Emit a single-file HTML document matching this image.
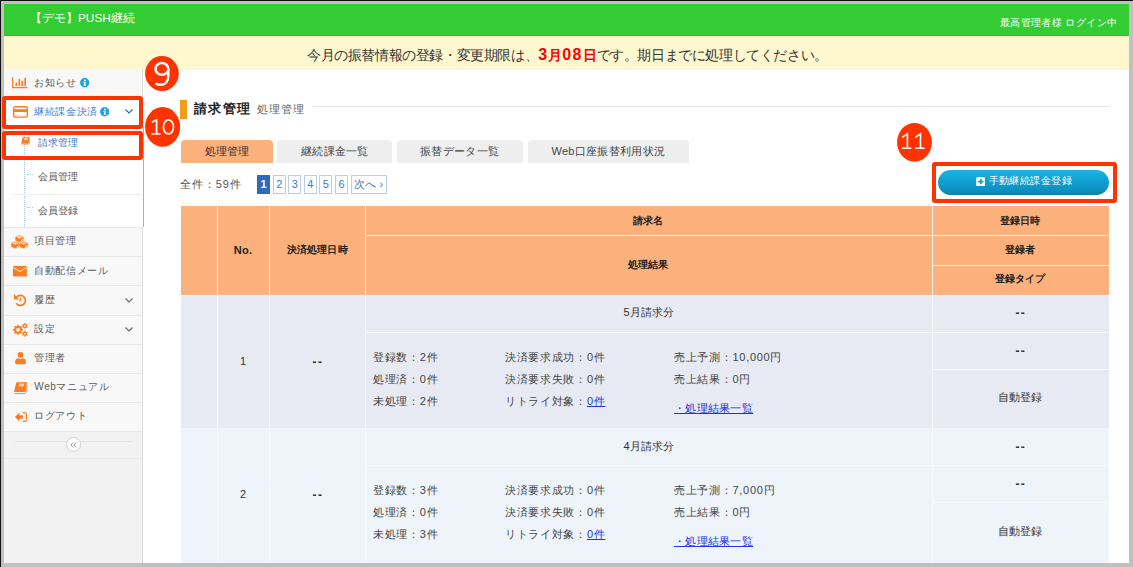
<!DOCTYPE html>
<html lang="ja">
<head>
<meta charset="utf-8">
<style>
*{box-sizing:border-box;margin:0;padding:0}
html,body{width:1133px;height:567px;overflow:hidden;background:#c0c0c0}
body{font-family:"Liberation Sans",sans-serif;color:#333;position:relative}
.frame-t{position:absolute;left:0;top:0;width:1133px;height:1px;background:#111}
.frame-l{position:absolute;left:0;top:0;width:1px;height:567px;background:#111}
.page{position:absolute;left:4px;top:4px;width:1125px;height:559px;background:#fff;overflow:hidden}
.abs{position:absolute}
.hdr{left:0;top:0;width:1125px;height:32px;background:#33cc33;color:#fff;border-bottom:1px solid #2fc02f}
.hdr .ttl{position:absolute;left:26px;top:7px;font-size:11.8px;white-space:nowrap}
.hdr .usr{position:absolute;right:11.6px;top:12px;font-size:10px;letter-spacing:0.4px;white-space:nowrap}
.ban{left:0;top:32px;width:1125px;height:33.5px;background:#fff8ce;font-size:14px;letter-spacing:-0.4px;color:#333;white-space:nowrap}
.ban span.t{position:absolute;left:303px;top:10px}
.ban b{color:#ff0000;letter-spacing:0}
.ban i{font-style:normal;font-size:16px;letter-spacing:1.2px}
.side{left:0;top:65px;width:139px;height:494px;background:#f2f2f2;border-right:1px solid #dcdcdc}

.mi{position:absolute;left:0;width:138px;background:#f8f8f8;border-top:1px solid #e8e8e8;font-size:11px;color:#666;white-space:nowrap}
.mi .tx{position:absolute;left:30px;top:0}
.ic{position:absolute;overflow:visible}
.info{position:absolute;width:9px;height:9px;border-radius:50%;background:#1fa1dd;color:#fff;font:bold 7px/9px "Liberation Serif",serif;text-align:center}
.chev{position:absolute;width:8px;height:5px}
.sub{position:absolute;left:0;top:58.4px;width:140px;height:99.6px;background:#fff;border-right:1.5px solid #f59a5a}
.si{position:absolute;left:0;width:138px;height:33.2px;font-size:11px;color:#666;white-space:nowrap}
.si .tx{position:absolute;left:34px}
.vdot{position:absolute;left:20px;top:0;width:0;height:99.6px;border-left:1px dotted #a9c9ea}
.hdot{position:absolute;left:23px;width:6px;height:0;border-top:1px dotted #a9c9ea}
.stx{position:absolute;left:30.3px;font-size:10px;line-height:12px;letter-spacing:0.6px;color:#5a5a5a;white-space:nowrap}
.stx.sb{left:34.2px;letter-spacing:0}
.red{position:absolute;border:4px solid #ff3300;border-radius:3px}

.A{position:absolute;white-space:nowrap}
.badge{position:absolute;background:#ff3300;border-radius:50%;color:#fff;text-align:center;font-family:"Liberation Sans",sans-serif}
.tab{position:absolute;top:139.6px;height:23.2px;border-radius:4px 4px 0 0;background:#eeeeee;color:#444;font-size:11px;letter-spacing:0.3px;line-height:23px;text-align:center;white-space:nowrap}
.pg{position:absolute;top:175.4px;width:13px;height:18.5px;border:1px solid #b9cdea;color:#3b7ac9;font-size:11px;line-height:16.5px;text-align:center;background:#fff}
.th{position:absolute;font-weight:bold;color:#222;font-size:10px;text-align:center;white-space:nowrap}
.td{position:absolute;color:#333;font-size:11px;text-align:center;white-space:nowrap}
.hl{position:absolute;height:1px;background:#fbf4ee}
.vl{position:absolute;width:1px;background:#fbf4ee}
.bl{position:absolute;height:1px;background:#f7f9fc}
.bv{position:absolute;width:1px;background:#f7f9fc}
.det{position:absolute;color:#444;font-size:11px;letter-spacing:0.7px;white-space:nowrap;line-height:22px}
.det a{color:#2233dd;text-decoration:underline}
.det a.l{letter-spacing:0.3px}
.dash{font-size:12px!important;letter-spacing:1.4px;text-indent:1.4px;margin-top:1.5px}
</style>
</head>
<body>
<div class="page">
  <div class="abs hdr"><span class="ttl">【デモ】PUSH継続</span><span class="usr">最高管理者様 ログイン中</span></div>
  <div class="abs ban"><span class="t">今月の振替情報の登録・変更期限は、<b><i>3</i>月<i>08</i>日</b>です。期日までに処理してください。</span></div>

  <div class="abs side">
    <div class="mi" style="top:0;height:29.2px;border-top:none"></div>
    <div class="mi" style="top:29.2px;height:29.2px;background:#fff;border-top:none"></div>
    <div class="sub">
      <div class="vdot"></div>
      <div class="A" style="left:7px;top:66.4px;width:131px;height:1px;background:#eeeeee"></div>
      <div class="hdot" style="top:46.3px"></div>
      <div class="hdot" style="top:80px"></div>
    </div>
    <div class="mi" style="top:158px;height:29.2px"></div>
    <div class="mi" style="top:187.2px;height:29.2px"></div>
    <div class="mi" style="top:216.4px;height:29.2px"></div>
    <div class="mi" style="top:245.6px;height:29.2px"></div>
    <div class="mi" style="top:274.8px;height:29.2px"></div>
    <div class="mi" style="top:304px;height:29.2px"></div>
    <div class="mi" style="top:333.2px;height:29.2px"></div>
    <div class="stx" style="top:7.6px">お知らせ</div>
    <div class="stx" style="top:36.7px;color:#3b7dcc">継続課金決済</div>
    <div class="stx sb" style="top:67.9px;color:#3b7dcc">請求管理</div>
    <div class="stx sb" style="top:102px">会員管理</div>
    <div class="stx sb" style="top:135.9px">会員登録</div>
    <div class="stx" style="top:166.3px">項目管理</div>
    <div class="stx" style="top:196px">自動配信メール</div>
    <div class="stx" style="top:224.6px">履歴</div>
    <div class="stx" style="top:254.4px">設定</div>
    <div class="stx" style="top:282.7px">管理者</div>
    <div class="stx" style="top:312.4px">Webマニュアル</div>
    <div class="stx" style="top:341.4px">ログアウト</div>
    <svg class="ic" style="left:8px;top:7.8px" width="16" height="12" viewBox="0 0 16 12"><path d="M0.6 0.3V10.6H15.4" fill="none" stroke="#fb7d22" stroke-width="1.2"/><path d="M4.3 8.4V6.3M7.3 8.4V2.5M10.2 8.4V4.6M13.2 8.4V1.6" stroke="#fb7d22" stroke-width="1.7" stroke-linecap="round"/></svg>
    <svg class="ic" style="left:75.5px;top:9px" width="9.4" height="9.4" viewBox="0 0 10 10"><circle cx="5" cy="5" r="5" fill="#1ca5df"/><circle cx="5.2" cy="2.6" r="1" fill="#fff"/><path d="M3.6 4.3H5.9V7.6H6.6V8.3H3.6V7.6H4.3V5H3.6Z" fill="#fff"/></svg>
    <svg class="ic" style="left:8.9px;top:36.9px" width="15" height="12" viewBox="0 0 15 12"><rect x="0.7" y="0.7" width="13.6" height="10.4" rx="1.6" fill="none" stroke="#fb7d22" stroke-width="1.4"/><rect x="0.7" y="3.2" width="13.6" height="2.8" fill="#fb7d22"/><path d="M2.5 9H3.5M4.7 9H6.2" stroke="#fb9a5a" stroke-width="0.8"/></svg>
    <svg class="ic" style="left:96px;top:37.8px" width="9.4" height="9.4" viewBox="0 0 10 10"><circle cx="5" cy="5" r="5" fill="#1ca5df"/><circle cx="5.2" cy="2.6" r="1" fill="#fff"/><path d="M3.6 4.3H5.9V7.6H6.6V8.3H3.6V7.6H4.3V5H3.6Z" fill="#fff"/></svg>
    <svg class="chev" style="left:121px;top:39.5px" viewBox="0 0 8 5"><path d="M0.5 0.5L4 4L7.5 0.5" fill="none" stroke="#3a66a8" stroke-width="1.1"/></svg>
    <svg class="chev" style="left:121px;top:228.7px" viewBox="0 0 8 5"><path d="M0.5 0.5L4 4L7.5 0.5" fill="none" stroke="#666" stroke-width="1.1"/></svg>
    <svg class="chev" style="left:121px;top:257.5px" viewBox="0 0 8 5"><path d="M0.5 0.5L4 4L7.5 0.5" fill="none" stroke="#666" stroke-width="1.1"/></svg>
    <svg class="ic" style="left:16.9px;top:67.7px" width="9" height="7.6" viewBox="0 0 13.3 11.4"><path d="M2.6 0.2H12.6Q13.3 0.2 13.1 1L11.2 9.2Q11 10 10.2 10H0.8Q0 10 0.2 9.2L2.1 1Q2.3 0.2 2.6 0.2Z" fill="#fb7d22"/><path d="M0.5 11.6H10.3Q11.6 11.6 12 10.4L13.3 3.6" fill="none" stroke="#fb7d22" stroke-width="0.9"/><path d="M5 2.2H10.2M4.6 3.8H9.8" stroke="#fff" stroke-width="0.9"/></svg>
    <svg class="ic" style="left:7.1px;top:165.8px" width="17.1" height="13.8" viewBox="0 0 17.1 13.8"><path d="M8.5 0L12.9 1.9V5.699999999999999L8.5 7.6L4.1 5.699999999999999V1.9Z" fill="#fb7d22" stroke="#f8f8f8" stroke-width="0.5"/><path d="M8.5 1.2L11.3 2.0L8.5 3.42L5.699999999999999 2.0Z" fill="#fff"/><path d="M11.9 3.8L11.9 4.712L9.7 6.84L9.7 5.928Z" fill="#fff"/><path d="M4.4 6.2L8.8 8.1V11.899999999999999L4.4 13.8L0.0 11.899999999999999V8.1Z" fill="#fb7d22" stroke="#f8f8f8" stroke-width="0.5"/><path d="M4.4 7.4L7.200000000000001 8.2L4.4 9.620000000000001L1.6 8.2Z" fill="#fff"/><path d="M7.800000000000001 10.0L7.800000000000001 10.911999999999999L5.6000000000000005 13.04L5.6000000000000005 12.128Z" fill="#fff"/><path d="M12.7 6.2L17.1 8.1V11.899999999999999L12.7 13.8L8.299999999999999 11.899999999999999V8.1Z" fill="#fb7d22" stroke="#f8f8f8" stroke-width="0.5"/><path d="M12.7 7.4L15.500000000000002 8.2L12.7 9.620000000000001L9.899999999999999 8.2Z" fill="#fff"/><path d="M16.1 10.0L16.1 10.911999999999999L13.899999999999999 13.04L13.899999999999999 12.128Z" fill="#fff"/></svg>
    <svg class="ic" style="left:9.3px;top:197.2px" width="13.9" height="10.6" viewBox="0 0 13.9 10.6"><rect x="0" y="0" width="13.9" height="10.6" rx="1.2" fill="#fb7d22"/><path d="M0.3 1.6L6.95 5.6L13.6 1.6" fill="none" stroke="#f8f8f8" stroke-width="0.9"/></svg>
    <svg class="ic" style="left:10px;top:225px" width="12.2" height="12" viewBox="0 0 12.2 12"><path d="M2.6 3.2A5 5 0 1 1 2.3 9.2" fill="none" stroke="#fb7d22" stroke-width="1.7"/><path d="M0 0L0 5.6L5.2 5.6Z" fill="#fb7d22"/><path d="M6.4 3.6V6.8H5.2" fill="none" stroke="#fb7d22" stroke-width="1.1"/></svg>
    <svg class="ic" style="left:8.9px;top:253.6px" width="15" height="13.6" viewBox="0 0 15 13.6"><path d="M3.51 3.20 L4.24 2.97 L4.24 1.76 L5.76 1.76 L5.76 2.97 L6.49 3.20 L7.17 3.56 L8.03 2.70 L9.10 3.77 L8.24 4.63 L8.60 5.31 L8.83 6.04 L10.04 6.04 L10.04 7.56 L8.83 7.56 L8.60 8.29 L8.24 8.97 L9.10 9.83 L8.03 10.90 L7.17 10.04 L6.49 10.40 L5.76 10.63 L5.76 11.84 L4.24 11.84 L4.24 10.63 L3.51 10.40 L2.83 10.04 L1.97 10.90 L0.90 9.83 L1.76 8.97 L1.40 8.29 L1.17 7.56 L-0.04 7.56 L-0.04 6.04 L1.17 6.04 L1.40 5.31 L1.76 4.63 L0.90 3.77 L1.97 2.70 L2.83 3.56ZM6.90 6.80A1.9 1.9 0 1 0 3.10 6.80A1.9 1.9 0 1 0 6.90 6.80Z" fill="#fb7d22" fill-rule="evenodd"/><path d="M10.80 0.99 L11.33 0.77 L11.31 -0.04 L12.49 -0.04 L12.47 0.77 L13.00 0.99 L13.46 1.34 L14.15 0.92 L14.74 1.94 L14.03 2.33 L14.10 2.90 L14.03 3.47 L14.74 3.86 L14.15 4.88 L13.46 4.46 L13.00 4.81 L12.47 5.03 L12.49 5.84 L11.31 5.84 L11.33 5.03 L10.80 4.81 L10.34 4.46 L9.65 4.88 L9.06 3.86 L9.77 3.47 L9.70 2.90 L9.77 2.33 L9.06 1.94 L9.65 0.92 L10.34 1.34ZM12.80 2.90A0.9 0.9 0 1 0 11.00 2.90A0.9 0.9 0 1 0 12.80 2.90Z" fill="#fb7d22" fill-rule="evenodd"/><path d="M10.80 8.79 L11.33 8.57 L11.31 7.76 L12.49 7.76 L12.47 8.57 L13.00 8.79 L13.46 9.14 L14.15 8.72 L14.74 9.74 L14.03 10.13 L14.10 10.70 L14.03 11.27 L14.74 11.66 L14.15 12.68 L13.46 12.26 L13.00 12.61 L12.47 12.83 L12.49 13.64 L11.31 13.64 L11.33 12.83 L10.80 12.61 L10.34 12.26 L9.65 12.68 L9.06 11.66 L9.77 11.27 L9.70 10.70 L9.77 10.13 L9.06 9.74 L9.65 8.72 L10.34 9.14ZM12.80 10.70A0.9 0.9 0 1 0 11.00 10.70A0.9 0.9 0 1 0 12.80 10.70Z" fill="#fb7d22" fill-rule="evenodd"/></svg>
    <svg class="ic" style="left:10.9px;top:283px" width="11" height="12.2" viewBox="0 0 11 12.2"><circle cx="5.5" cy="2.9" r="2.9" fill="#fb7d22"/><path d="M0 10.6C0 7.8 1.6 6.3 3.2 6.3Q5.5 7.6 7.8 6.3C9.4 6.3 11 7.8 11 10.6Q11 12.2 9.6 12.2H1.4Q0 12.2 0 10.6Z" fill="#fb7d22"/></svg>
    <svg class="ic" style="left:9.7px;top:312.5px" width="13.3" height="12.4" viewBox="0 0 13.3 12.4"><path d="M2.6 0.2H12.6Q13.3 0.2 13.1 1L11.2 9.2Q11 10 10.2 10H0.8Q0 10 0.2 9.2L2.1 1Q2.3 0.2 2.6 0.2Z" fill="#fb7d22"/><path d="M0.5 11.6H10.3Q11.6 11.6 12 10.4L13.3 3.6" fill="none" stroke="#fb7d22" stroke-width="0.9"/><path d="M5 2.2H10.2M4.6 3.8H9.8" stroke="#fff" stroke-width="0.9"/></svg>
    <svg class="ic" style="left:10.9px;top:342.9px" width="12.2" height="10" viewBox="0 0 12.2 10"><path d="M0 5L4.4 0.6V3.2H8V6.8H4.4V9.4Z" fill="#fb7d22"/><path d="M7.6 0.7H9.6Q11.5 0.7 11.5 2.6V7.4Q11.5 9.3 9.6 9.3H7.6" fill="none" stroke="#fb7d22" stroke-width="1.2"/></svg>
    <div class="mi" style="top:362.4px;height:27px;background:#f2f2f2">
      <div style="position:absolute;left:11px;top:9px;width:117px;height:1px;background:#e4e4e4"></div>
      <div style="position:absolute;left:61.6px;top:4.8px;width:15px;height:15px;border-radius:50%;border:1px solid #d0d0d0;background:#fff"></div><svg style="position:absolute;left:66px;top:9.5px" width="7" height="6" viewBox="0 0 7 6"><path d="M3.2 0.5L0.8 3L3.2 5.5M6.2 0.5L3.8 3L6.2 5.5" fill="none" stroke="#888" stroke-width="0.9"/></svg>
    </div>
    <div class="mi" style="top:389.3px;height:1px;background:#e8e8e8;border:none"></div>
  </div>
</div>

<!-- main content -->
<div class="A" style="left:180px;top:99.5px;width:7px;height:19.6px;background:#f39c18"></div>
<div class="A" style="left:194px;top:100px;font-size:13px;font-weight:bold;color:#222;letter-spacing:1.4px;line-height:17px">請求管理</div>
<div class="A" style="left:256.5px;top:102px;font-size:11px;color:#666;letter-spacing:1px;line-height:14px">処理管理</div>
<div class="A" style="left:313px;top:106px;width:796px;height:1px;background:#e6e6e6"></div>

<div class="tab" style="left:180.6px;width:92.4px;background:#fcb07b;color:#333;letter-spacing:0">処理管理</div>
<div class="tab" style="left:277.4px;width:115px">継続課金一覧</div>
<div class="tab" style="left:396.6px;width:126px">振替データ一覧</div>
<div class="tab" style="left:527.6px;width:161.4px">Web口座振替利用状況</div>

<div class="A" style="left:180px;top:176px;font-size:11px;letter-spacing:0.9px;color:#555;line-height:17px">全件：59件</div>
<div class="pg" style="left:257px;background:#2d6bb8;border-color:#2d6bb8;color:#fff;font-weight:bold">1</div>
<div class="pg" style="left:272.7px">2</div>
<div class="pg" style="left:288.2px">3</div>
<div class="pg" style="left:303.7px">4</div>
<div class="pg" style="left:319.4px">5</div>
<div class="pg" style="left:335px">6</div>
<div class="pg" style="left:350.8px;width:36px">次へ ›</div>

<div class="A" style="left:938px;top:170.4px;width:171px;height:24.8px;border-radius:12.4px;background:linear-gradient(#1bb3e3,#0a8fbf 85%,#0a7fa8);"></div>
<svg class="A" style="left:975.6px;top:176.8px" width="9.7" height="9.4" viewBox="0 0 10 10"><rect x="0" y="0" width="10" height="10" rx="2" fill="#fff"/><path d="M5 2.2V7.8M2.2 5H7.8" stroke="#0f9acb" stroke-width="1.8"/></svg>
<div class="A" style="left:988.5px;top:174px;font-size:10px;letter-spacing:0.45px;color:#fff;line-height:14px">手動継続課金登録</div>

<!-- table header -->
<div class="A" style="left:180.5px;top:205.7px;width:928px;height:89.3px;background:#fcb07b"></div>
<div class="vl" style="left:217.3px;top:205.7px;height:89.3px"></div>
<div class="vl" style="left:269px;top:205.7px;height:89.3px"></div>
<div class="vl" style="left:365.4px;top:205.7px;height:89.3px"></div>
<div class="vl" style="left:931.6px;top:205.7px;height:89.3px"></div>
<div class="hl" style="left:365.4px;top:234.8px;width:743px"></div>
<div class="hl" style="left:931.6px;top:265px;width:177px"></div>
<div class="th" style="left:217.3px;top:240px;width:51.7px;line-height:20px;font-size:11px;letter-spacing:0.3px">No.</div>
<div class="th" style="left:269px;top:240px;width:96.4px;line-height:20px;letter-spacing:0.2px">決済処理日時</div>
<div class="th" style="left:365.4px;top:211px;width:566.2px;line-height:20px">請求名</div>
<div class="th" style="left:365.4px;top:255px;width:566.2px;line-height:20px">処理結果</div>
<div class="th" style="left:931.6px;top:211px;width:177px;line-height:20px">登録日時</div>
<div class="th" style="left:931.6px;top:240px;width:177px;line-height:20px">登録者</div>
<div class="th" style="left:931.6px;top:269px;width:177px;line-height:20px">登録タイプ</div>

<!-- row 1 -->
<div class="A" style="left:180.5px;top:295px;width:928px;height:132.8px;background:#e7eaf2"></div>
<div class="bv" style="left:217.3px;top:295px;height:132.8px"></div>
<div class="bv" style="left:269px;top:295px;height:132.8px"></div>
<div class="bv" style="left:365.4px;top:295px;height:132.8px"></div>
<div class="bv" style="left:931.6px;top:295px;height:132.8px"></div>
<div class="bl" style="left:180.5px;top:294.6px;width:928px"></div>
<div class="bl" style="left:365.4px;top:331.6px;width:743px"></div>
<div class="bl" style="left:931.6px;top:369.3px;width:177px"></div>
<div class="td" style="left:217.3px;top:351px;width:51.7px;line-height:20px">1</div>
<div class="td dash" style="left:269px;top:350px;width:96.4px;line-height:20px;font-weight:bold">--</div>
<div class="td" style="left:365.4px;top:302px;width:566.2px;line-height:20px">5月請求分</div>
<div class="td dash" style="left:931.6px;top:301px;width:177px;line-height:20px;font-weight:bold">--</div>
<div class="td dash" style="left:931.6px;top:339px;width:177px;line-height:20px;font-weight:bold">--</div>
<div class="td" style="left:931.6px;top:387px;width:177px;line-height:20px">自動登録</div>
<div class="det" style="left:373px;top:346px">登録数：2件<br>処理済：0件<br>未処理：2件</div>
<div class="det" style="left:505px;top:346px">決済要求成功：0件<br>決済要求失敗：0件<br>リトライ対象：<a>0件</a></div>
<div class="det" style="left:674px;top:346px">売上予測：10,000円<br>売上結果：0円</div>
<div class="det" style="left:674px;top:397px"><a class="l">・処理結果一覧</a></div>

<!-- row 2 -->
<div class="A" style="left:180.5px;top:427.8px;width:928px;height:136px;background:#eff4fb"></div>
<div class="bv" style="left:217.3px;top:427.8px;height:136px"></div>
<div class="bv" style="left:269px;top:427.8px;height:136px"></div>
<div class="bv" style="left:365.4px;top:427.8px;height:136px"></div>
<div class="bv" style="left:931.6px;top:427.8px;height:136px"></div>
<div class="bl" style="left:365.4px;top:465px;width:743px"></div>
<div class="bl" style="left:931.6px;top:502px;width:177px"></div>
<div class="td" style="left:217.3px;top:484px;width:51.7px;line-height:20px">2</div>
<div class="td dash" style="left:269px;top:483px;width:96.4px;line-height:20px;font-weight:bold">--</div>
<div class="td" style="left:365.4px;top:436px;width:566.2px;line-height:20px">4月請求分</div>
<div class="td dash" style="left:931.6px;top:435px;width:177px;line-height:20px;font-weight:bold">--</div>
<div class="td dash" style="left:931.6px;top:472.5px;width:177px;line-height:20px;font-weight:bold">--</div>
<div class="td" style="left:931.6px;top:521px;width:177px;line-height:20px">自動登録</div>
<div class="det" style="left:373px;top:479px">登録数：3件<br>処理済：0件<br>未処理：3件</div>
<div class="det" style="left:505px;top:479px">決済要求成功：0件<br>決済要求失敗：0件<br>リトライ対象：<a>0件</a></div>
<div class="det" style="left:674px;top:479px">売上予測：7,000円<br>売上結果：0円</div>
<div class="det" style="left:674px;top:530px"><a class="l">・処理結果一覧</a></div>

<!-- annotations -->
<div class="red" style="left:2px;top:96px;width:141px;height:32.5px"></div>
<div class="red" style="left:2px;top:131px;width:141px;height:29px"></div>
<div class="red" style="left:932.3px;top:162px;width:184.7px;height:40.8px"></div>
<svg class="A" style="left:0;top:0" width="1133" height="567" viewBox="0 0 1133 567">
<ellipse cx="161.95" cy="73.5" rx="16.85" ry="17.5" fill="#ff3300"/>
<ellipse cx="162.6" cy="126.9" rx="17.5" ry="19.8" fill="#ff3300"/>
<ellipse cx="914.5" cy="142.3" rx="17.4" ry="19.4" fill="#ff3300"/>
<g fill="none" stroke="#fff">
<ellipse cx="161.9" cy="68.9" rx="6.4" ry="5.9" stroke-width="2.5"/>
<path d="M168.3 68.9V75.5C168.3 81.2 165.4 84.8 161 84.8C158.9 84.8 157.2 84.4 155.6 83.7" stroke-width="2.5"/>
<path d="M151.8 122.2L156.6 119.8V134M151.4 134H160.6" stroke-width="1.7"/>
<ellipse cx="168.45" cy="126.9" rx="5.05" ry="7.05" stroke-width="1.7"/>
<path d="M902.3 137.4L907.4 133.8V148.2M901.9 148.2H911.3" stroke-width="1.6"/>
<path d="M915.4 137.4L920.5 133.8V148.2M915 148.2H924.6" stroke-width="1.6"/>
</g></svg>


<!-- frame overlay -->
<div class="A" style="left:1129px;top:0;width:4px;height:567px;background:#c0c0c0"></div>
<div class="A" style="left:0;top:563px;width:1133px;height:4px;background:#c0c0c0"></div>
<div class="frame-t"></div><div class="frame-l"></div>
</body>
</html>
